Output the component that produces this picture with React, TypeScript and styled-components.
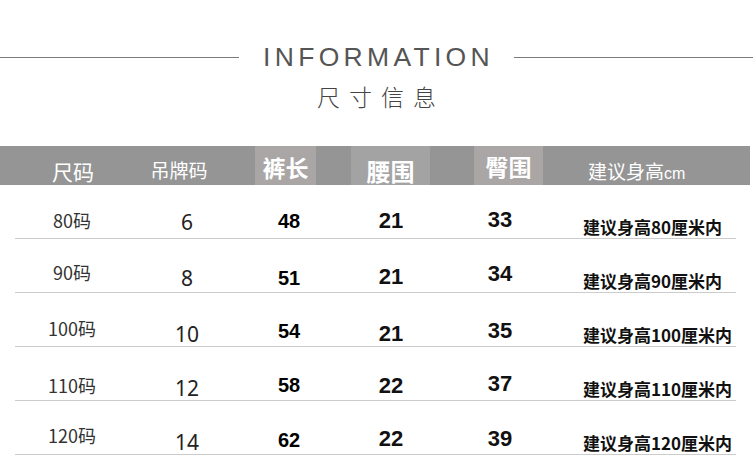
import React from "react";
import styled, { createGlobalStyle } from "styled-components";

const GlobalStyle = createGlobalStyle`
  html, body {
    margin: 0;
    padding: 0;
    background: #ffffff;
  }
  body {
    font-family: "Noto Sans CJK SC", "Noto Sans", sans-serif;
  }
`;

const Page = styled.div`
  width: 753px;
  height: 476px;
  overflow: hidden;
  box-sizing: border-box;
  padding-top: 42px;
`;

const TitleRow = styled.div`
  display: flex;
  align-items: center;
  height: 30px;
`;

const Rule = styled.div`
  flex: 1;
  height: 1px;
  background: #7a7a7a;
`;

const Title = styled.h1`
  margin: 0 20px 0 24px;
  font-family: "Liberation Sans", Arial, sans-serif;
  font-weight: 400;
  font-size: 26.5px;
  line-height: 30px;
  letter-spacing: 4.3px;
  color: #555555;
`;

const Subtitle = styled.div`
  margin-top: 11px;
  text-align: center;
  font-size: 23px;
  line-height: 26px;
  letter-spacing: 9px;
  padding-left: 9px;
  font-weight: 300;
  color: #444444;
`;

// header bar of the size table
const HeaderBar = styled.div`
  margin-top: 37px;
  width: 750px;
  height: 39px;
  display: flex;
  background: #959595;
`;

const HeaderCell = styled.div<{
  $w?: number;
  $ml?: number;
  $y: number;
  $size: number;
  $bg?: string;
  $bold?: boolean;
  $left?: boolean;
}>`
  flex: none;
  width: ${(p) => (p.$w ? `${p.$w}px` : "auto")};
  margin-left: ${(p) => p.$ml ?? 0}px;
  height: 100%;
  box-sizing: border-box;
  padding-top: ${(p) => p.$y - p.$size / 2}px;
  background: ${(p) => p.$bg ?? "transparent"};
  color: #ffffff;
  font-size: ${(p) => p.$size}px;
  font-weight: ${(p) => (p.$bold ? 700 : 400)};
  line-height: ${(p) => p.$size}px;
  text-align: ${(p) => (p.$left ? "left" : "center")};
  white-space: nowrap;
`;

const Unit = styled.span`
  font-family: "Liberation Sans", Arial, sans-serif;
  font-size: 16px;
`;

const Rows = styled.div`
  display: flex;
  flex-direction: column;
`;

const Row = styled.div`
  display: flex;
  margin-left: 15px;
  width: 721px;
  height: 54px;
  box-sizing: border-box;
  border-bottom: 1px solid #cccccc;
`;

const Cell = styled.div<{ $w?: number; $y: number }>`
  flex: none;
  width: ${(p) => (p.$w ? `${p.$w}px` : "auto")};
  box-sizing: border-box;
  padding-top: ${(p) => p.$y - 12}px;
  line-height: 24px;
  text-align: center;
  white-space: nowrap;
`;

const SizeCell = styled(Cell)`
  font-size: 18px;
  color: #333333;
`;

const TagCell = styled(Cell)`
  font-family: "Noto Sans", sans-serif;
  font-size: 21px;
  color: #222222;
`;

const LengthCell = styled(Cell)`
  font-family: "Liberation Sans", Arial, sans-serif;
  font-size: 20px;
  font-weight: 700;
  color: #000000;
`;

const GirthCell = styled(Cell)`
  font-family: "Liberation Sans", Arial, sans-serif;
  font-size: 22px;
  font-weight: 700;
  color: #111111;
`;

const AdviceCell = styled(Cell)`
  padding-left: 32px;
  text-align: left;
  font-size: 17px;
  font-weight: 700;
  color: #111111;
`;

type SizeRow = {
  size: string;
  tag: string;
  len: string;
  waist: string;
  hip: string;
  height: string;
  y: number[];
};

const rows: SizeRow[] = [
  { size: "80码", tag: "6", len: "48", waist: "21", hip: "33", height: "80", y: [35, 37, 35.5, 36, 35, 41.5] },
  { size: "90码", tag: "8", len: "51", waist: "21", hip: "34", height: "90", y: [33, 39, 38.5, 38, 35, 42] },
  { size: "100码", tag: "10", len: "54", waist: "21", hip: "35", height: "100", y: [35, 41, 37.5, 41, 38, 41.5] },
  { size: "110码", tag: "12", len: "58", waist: "22", hip: "37", height: "110", y: [38, 41, 37.5, 38.5, 36.5, 42] },
  { size: "120码", tag: "14", len: "62", waist: "22", hip: "39", height: "120", y: [34, 40.5, 38.5, 38, 37.5, 42] },
];

export default function App() {
  return (
    <Page>
      <GlobalStyle />
      <TitleRow>
        <Rule />
        <Title>INFORMATION</Title>
        <Rule />
      </TitleRow>
      <Subtitle>尺寸信息</Subtitle>

      <HeaderBar>
        <HeaderCell $w={146} $y={25} $size={21}>尺码</HeaderCell>
        <HeaderCell $w={66} $y={23} $size={19}>吊牌码</HeaderCell>
        <HeaderCell $ml={43} $w={61} $y={21} $size={23} $bg="#aaa6a6" $bold>裤长</HeaderCell>
        <HeaderCell $ml={35} $w={79} $y={25} $size={24} $bg="#a3a3a3" $bold>腰围</HeaderCell>
        <HeaderCell $ml={44} $w={69} $y={20} $size={23} $bg="#aaa6a6" $bold>臀围</HeaderCell>
        <HeaderCell $ml={45} $y={24} $size={19} $left>
          建议身高<Unit>cm</Unit>
        </HeaderCell>
      </HeaderBar>

      <Rows>
        {rows.map((r) => (
          <Row key={r.size}>
            <SizeCell $w={114} $y={r.y[0]}>{r.size}</SizeCell>
            <TagCell $w={116} $y={r.y[1]}>{r.tag}</TagCell>
            <LengthCell $w={88} $y={r.y[2]}>{r.len}</LengthCell>
            <GirthCell $w={116} $y={r.y[3]}>{r.waist}</GirthCell>
            <GirthCell $w={102} $y={r.y[4]}>{r.hip}</GirthCell>
            <AdviceCell $y={r.y[5]}>建议身高{r.height}厘米内</AdviceCell>
          </Row>
        ))}
      </Rows>
    </Page>
  );
}
